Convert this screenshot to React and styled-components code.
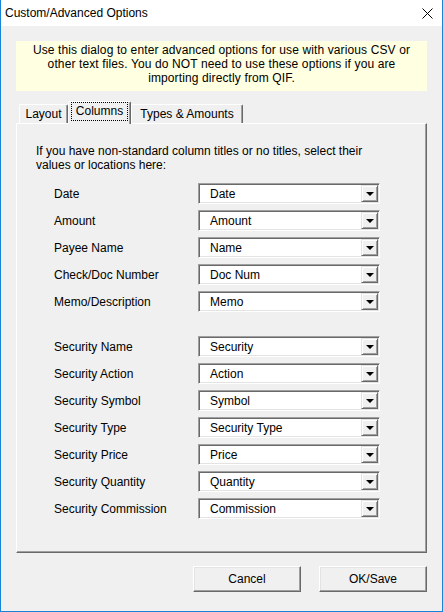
import React from "react";
import styled, { createGlobalStyle } from "styled-components";

const Global = createGlobalStyle`
  html, body { margin: 0; padding: 0; background: #f0f0f0; }
  body { font-family: "Liberation Sans", Arial, sans-serif; font-size: 12px; color: #000; }
`;

const Window = styled.div`
  width: 443px;
  height: 612px;
  box-sizing: border-box;
  border: 1px solid #1883d7;
  border-top: none;
  background: #f0f0f0;
  display: flex;
  flex-direction: column;
`;

const TitleBar = styled.div`
  height: 26px;
  background: #fff;
  display: flex;
  align-items: center;
  padding: 0 0 0 4px;
  font-size: 12px;
  flex-shrink: 0;
`;

const CloseBox = styled.div`
  margin-left: auto;
  width: 30px;
  height: 26px;
  display: flex;
  align-items: center;
  justify-content: center;
`;

const Body = styled.div`
  padding: 15px 15px 0 15px;
  display: flex;
  flex-direction: column;
`;

const Note = styled.div`
  height: 50px;
  box-sizing: border-box;
  background: #ffffe1;
  text-align: center;
  line-height: 14px;
  padding: 2px 8px 0;
  letter-spacing: 0.12px;
`;

const TabStrip = styled.div`
  margin-top: 10px;
  height: 22px;
  display: flex;
  align-items: flex-end;
  padding-left: 3px;
  position: relative;
  z-index: 1;
`;

const Tab = styled.div`
  box-sizing: border-box;
  width: ${(p) => p.$w}px;
  height: ${(p) => (p.$active ? 23 : 19)}px;
  margin-bottom: ${(p) => (p.$active ? -1 : 0)}px;
  background: #f0f0f0;
  border-top: 1px solid #fff;
  border-left: 1px solid #fff;
  border-right: 1px solid #696969;
  box-shadow: inset -1px 0 0 #a0a0a0;
  border-radius: 2px 2px 0 0;
  display: flex;
  align-items: ${(p) => (p.$active ? "flex-start" : "center")};
  justify-content: center;
  padding-top: ${(p) => (p.$active ? 1 : 0)}px;
  line-height: 14px;
`;

const FocusRect = styled.span`
  display: block;
  outline: 1px dotted #000;
  padding: 1px 4px 2px;
`;

const Panel = styled.div`
  height: 430px;
  box-sizing: border-box;
  border-top: 1px solid #fff;
  border-left: 1px solid #fff;
  border-right: 1px solid #696969;
  border-bottom: 1px solid #696969;
  box-shadow: inset -1px -1px 0 #a0a0a0;
  padding: 20px 0 0 19px;
`;

const Intro = styled.div`
  line-height: 14px;
`;

const Grid = styled.div`
  margin-top: 11px;
  margin-left: 18px;
  display: grid;
  grid-template-columns: 144px 182px;
  row-gap: 6px;
`;

const Label = styled.div`
  height: 21px;
  display: flex;
  align-items: center;
  margin-top: ${(p) => (p.$gap ? 18 : 0)}px;
`;

const Combo = styled.div`
  height: 21px;
  box-sizing: border-box;
  background: #fff;
  border-top: 1px solid #a0a0a0;
  border-left: 1px solid #a0a0a0;
  border-right: 1px solid #fff;
  border-bottom: 1px solid #fff;
  box-shadow: inset 1px 1px 0 #696969, inset -1px -1px 0 #e3e3e3;
  display: flex;
  align-items: center;
  justify-content: space-between;
  padding: 1px 1px 1px 11px;
  margin-top: ${(p) => (p.$gap ? 18 : 0)}px;
`;

const DropBtn = styled.div`
  width: 17px;
  height: 17px;
  box-sizing: border-box;
  background: #f0f0f0;
  border-top: 1px solid #e3e3e3;
  border-left: 1px solid #e3e3e3;
  border-right: 1px solid #696969;
  border-bottom: 1px solid #696969;
  box-shadow: inset 1px 1px 0 #fff, inset -1px -1px 0 #a0a0a0;
  display: flex;
  align-items: center;
  justify-content: center;
  &::after {
    content: "";
    width: 0;
    height: 0;
    border-left: 4px solid transparent;
    border-right: 4px solid transparent;
    border-top: 4px solid #000;
    margin-top: 1px;
  }
`;

const Buttons = styled.div`
  margin-top: 13px;
  display: flex;
  justify-content: flex-end;
  gap: 18px;
`;

const Button = styled.button`
  width: 108px;
  height: 26px;
  box-sizing: border-box;
  background: #f0f0f0;
  font: inherit;
  color: #000;
  border-top: 1px solid #fff;
  border-left: 1px solid #fff;
  border-right: 1px solid #696969;
  border-bottom: 1px solid #696969;
  box-shadow: inset -1px -1px 0 #a0a0a0, inset 1px 1px 0 #e3e3e3;
  padding: 0;
`;

const groups = [
  [
    ["Date", "Date"],
    ["Amount", "Amount"],
    ["Payee Name", "Name"],
    ["Check/Doc Number", "Doc Num"],
    ["Memo/Description", "Memo"],
  ],
  [
    ["Security Name", "Security"],
    ["Security Action", "Action"],
    ["Security Symbol", "Symbol"],
    ["Security Type", "Security Type"],
    ["Security Price", "Price"],
    ["Security Quantity", "Quantity"],
    ["Security Commission", "Commission"],
  ],
];

export default function App() {
  return (
    <>
      <Global />
      <Window>
        <TitleBar>
          <span>Custom/Advanced Options</span>
          <CloseBox>
            <svg width="11" height="11" viewBox="0 0 11 11">
              <path d="M0.5 0.5 L10.5 10.5 M10.5 0.5 L0.5 10.5" stroke="#000" strokeWidth="1" />
            </svg>
          </CloseBox>
        </TitleBar>
        <Body>
          <Note>
            Use this dialog to enter advanced options for use with various CSV or
            other text files. You do NOT need to use these options if you are
            importing directly from QIF.
          </Note>
          <TabStrip>
            <Tab $w={49}>Layout</Tab>
            <Tab $w={63} $active>
              <FocusRect>Columns</FocusRect>
            </Tab>
            <Tab $w={112}>Types &amp; Amounts</Tab>
          </TabStrip>
          <Panel>
            <Intro>
              If you have non-standard column titles or no titles, select their
              <br />
              values or locations here:
            </Intro>
            <Grid>
              {groups.map((g, gi) =>
                g.map(([label, value], i) => (
                  <React.Fragment key={label}>
                    <Label $gap={gi > 0 && i === 0}>{label}</Label>
                    <Combo $gap={gi > 0 && i === 0}>
                      <span>{value}</span>
                      <DropBtn />
                    </Combo>
                  </React.Fragment>
                ))
              )}
            </Grid>
          </Panel>
          <Buttons>
            <Button>Cancel</Button>
            <Button>OK/Save</Button>
          </Buttons>
        </Body>
      </Window>
    </>
  );
}
